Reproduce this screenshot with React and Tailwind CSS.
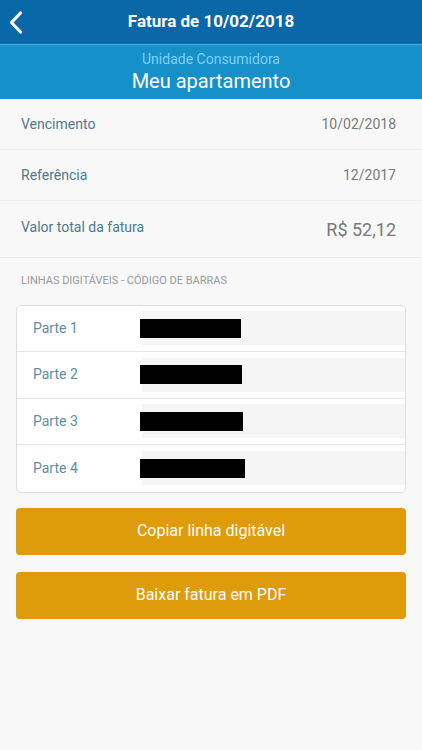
const rows = [
  { label: "Vencimento", value: "10/02/2018" },
  { label: "Referência", value: "12/2017" },
];

const parts = [
  { label: "Parte 1", w: "w-[101px]" },
  { label: "Parte 2", w: "w-[102px]" },
  { label: "Parte 3", w: "w-[103px]" },
  { label: "Parte 4", w: "w-[105px]" },
];

const App = () => {
  return (
    <div className="min-h-[750px] bg-[#f8f8f8] font-['Roboto',sans-serif]">
      <div className="relative flex h-[44px] items-center justify-center bg-[#0a68a9]">
        <svg
          className="absolute left-[8px] top-[11px]"
          width="16"
          height="23"
          viewBox="0 0 16 23"
        >
          <path
            d="M12.5 2 L3.5 11.5 L12.5 21"
            fill="none"
            stroke="#fff"
            strokeWidth="3.2"
            strokeLinecap="round"
            strokeLinejoin="round"
          />
        </svg>
        <span className="text-[17px] font-bold text-white">
          Fatura de 10/02/2018
        </span>
      </div>
      <div className="h-px bg-[#4fb0e0]" />
      <div className="flex h-[54px] flex-col items-center bg-[#1590c8] pt-[6px]">
        <span className="text-[14px] leading-[17px] text-[#7fd0f5]">
          Unidade Consumidora
        </span>
        <span className="text-[20px] leading-[26px] text-white">
          Meu apartamento
        </span>
      </div>

      {rows.map((r) => (
        <div
          key={r.label}
          className="flex h-[51px] items-center justify-between border-b border-[#ececec] pl-[21px] pr-[26px] pt-px text-[14px]"
        >
          <span className="text-[#4d7a8c]">{r.label}</span>
          <span className="text-[#7a7a7a]">{r.value}</span>
        </div>
      ))}
      <div className="flex h-[57px] items-center justify-between border-b border-[#ececec] pl-[21px] pr-[26px] text-[14px]">
        <span className="-mt-[4px] text-[#4d7a8c]">Valor total da fatura</span>
        <span className="text-[18px] text-[#7a7a7a]">R$ 52,12</span>
      </div>

      <div className="px-[21px] pt-[15px] text-[11px] text-[#9a9a9a]">
        LINHAS DIGITÁVEIS - CÓDIGO DE BARRAS
      </div>

      <div className="mx-[16px] mt-[15px] overflow-hidden rounded-[5px] border border-[#dedede] bg-white">
        {parts.map((p, i) => (
          <div
            key={p.label}
            className={`flex h-[46.5px] items-center ${
              i < parts.length - 1 ? "border-b border-[#e6e6e6]" : ""
            }`}
          >
            <span className="w-[125px] pl-[16px] text-[14px] text-[#5f8ea0]">
              {p.label}
            </span>
            <div className="flex h-[34px] flex-1 items-center bg-[#f5f5f5]">
              <div className={`-ml-[2px] h-[19px] bg-black ${p.w}`} />
            </div>
          </div>
        ))}
      </div>

      <div className="mx-[16px] mt-[15px] flex flex-col gap-[17px]">
        <button className="h-[47px] rounded-[4px] bg-[#de9b0a] text-[16px] text-white">
          Copiar linha digitável
        </button>
        <button className="h-[47px] rounded-[4px] bg-[#de9b0a] text-[16px] text-white">
          Baixar fatura em PDF
        </button>
      </div>
    </div>
  );
};

export default App;
